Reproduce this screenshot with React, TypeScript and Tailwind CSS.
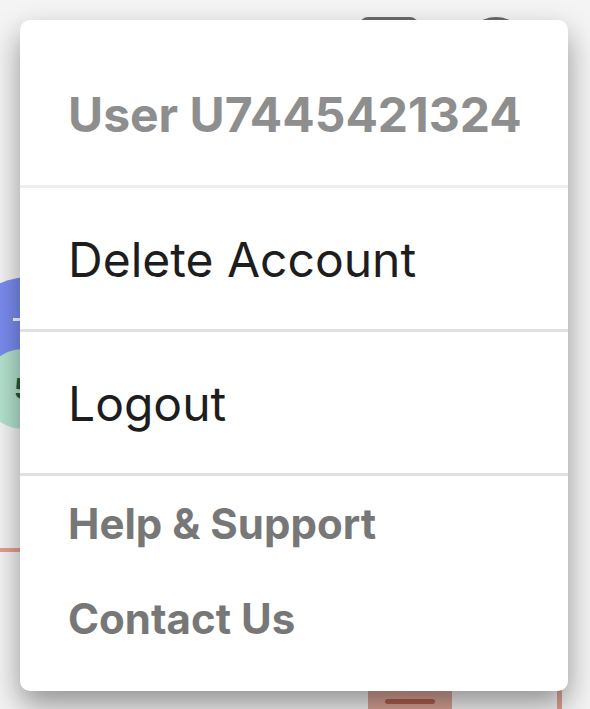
import { ReactNode } from "react";

const MenuItem = ({ children, className }: { children: ReactNode; className?: string }) => (
  <div className={`leading-none ${className ?? ""}`}>{children}</div>
);

export default function App() {
  return (
    <div
      className="relative w-[590px] h-[709px] overflow-hidden bg-[#f4f4f4]"
      style={{ fontFamily: "Inter, 'Noto Sans', sans-serif" }}
    >
      {/* page underneath the menu */}
      <div className="absolute left-[360px] top-[17px] w-[58px] h-[40px] rounded-[8px] bg-[#6b6b6b]" />
      <div className="absolute left-[464px] top-[17px] w-[64px] h-[64px] rounded-full bg-[#6b6b6b]" />
      <div className="absolute left-[-45px] top-[277px] w-[150px] h-[150px] rounded-full bg-[#7b8cf0]">
        <div className="absolute left-[58px] top-[41px] w-[14px] h-[3px] bg-white" />
      </div>
      <div className="absolute left-[-17px] top-[349px] w-[80px] h-[80px] rounded-full bg-[#b5e3d0] flex items-center justify-center">
        <span className="text-[28px] font-bold text-[#245a44]">5</span>
      </div>
      <div className="absolute left-0 top-[548px] w-[40px] h-[4px] bg-[#e6a08e]" />
      <div className="absolute left-[368px] top-[680px] w-[84px] h-[40px] bg-[#d9a498] flex justify-center">
        <div className="mt-[19px] w-[50px] h-[5px] rounded-full bg-[#b2604f]" />
      </div>
      <div className="absolute left-[557px] top-[680px] w-[5px] h-[40px] bg-[#dba091]" />

      {/* account menu */}
      <div className="absolute left-[20px] top-[20px] w-[548px] h-[671px] rounded-[10px] bg-white shadow-[0_14px_30px_rgba(0,0,0,0.4)] flex flex-col">
        <MenuItem className="h-[165px] pl-[48px] pt-[71px] text-[48px] font-bold text-[#8e8e8e]">
          User U7445421324
        </MenuItem>
        <div className="h-[3px] bg-[#eeeeee]" />
        <MenuItem className="h-[141px] pl-[48px] pt-[48px] text-[48px] text-[#1d1d1d]">
          Delete Account
        </MenuItem>
        <div className="h-[3px] bg-[#e0e0e0]" />
        <MenuItem className="h-[141px] pl-[48px] pt-[48px] text-[48px] text-[#1d1d1d]">
          Logout
        </MenuItem>
        <div className="h-[3px] bg-[#e0e0e0]" />
        <div className="flex flex-col gap-[53px] pt-[27px] pl-[48px] text-[42px] font-bold text-[#777777]">
          <MenuItem>Help &amp; Support</MenuItem>
          <MenuItem>Contact Us</MenuItem>
        </div>
      </div>
    </div>
  );
}
